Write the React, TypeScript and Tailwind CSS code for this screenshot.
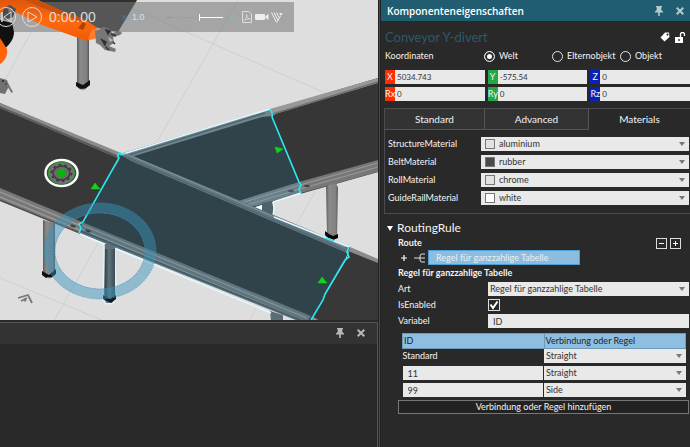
import { useState } from 'react'
import type { ReactNode } from 'react'

const materials = [
  { label: 'StructureMaterial', value: 'aluminium', swatch: 'bg-[#e2e2e2]' },
  { label: 'BeltMaterial', value: 'rubber', swatch: 'bg-[#4a4a4a]' },
  { label: 'RollMaterial', value: 'chrome', swatch: 'bg-[#e2e2e2]' },
  { label: 'GuideRailMaterial', value: 'white', swatch: 'bg-white' },
]

const coordinates = [
  { name: 'X', value: '5034.743', color: 'bg-[#ff2e00]' },
  { name: 'Y', value: '-575.54', color: 'bg-[#25a844]' },
  { name: 'Z', value: '0', color: 'bg-[#0a22b4]' },
  { name: 'Rx', value: '0', color: 'bg-[#ff2e00]' },
  { name: 'Ry', value: '0', color: 'bg-[#25a844]' },
  { name: 'Rz', value: '0', color: 'bg-[#0a22b4]' },
]

const PinIcon = () => (
  <svg viewBox="0 0 8 10" className="h-[10px] w-2" fill="currentColor">
    <path d="M1 0h6v1.2H6.3V4L8 5.4V6.4H4.8V10H3.2V6.4H0V5.4L1.7 4V1.2H1z" />
  </svg>
)

const CloseIcon = () => (
  <svg viewBox="0 0 8 8" className="h-2 w-2" stroke="currentColor" strokeWidth="2">
    <path d="M.7.7l6.6 6.6M7.3.7L.7 7.3" />
  </svg>
)

type SelectProps = {
  id?: string
  label?: string
  value: string
  options: string[]
  swatch?: string
}

const Select = ({ id, label, value, options, swatch }: SelectProps) => {
  const [current, setCurrent] = useState(value)
  return (
    <div className="relative h-[14px] w-full">
      <select
        id={id}
        aria-label={label}
        value={current}
        onChange={(e) => setCurrent(e.target.value)}
        className={`block h-[14px] w-full appearance-none bg-[#e9e9e9] pr-3 leading-[14px] text-[#333] ${
          swatch ? 'pl-[18px]' : 'pl-[2px]'
        }`}
      >
        {options.map((o) => (
          <option key={o}>{o}</option>
        ))}
      </select>
      {swatch && (
        <span
          className={`pointer-events-none absolute top-[2px] left-1 size-[10px] border border-[#777] ${swatch}`}
        />
      )}
      <svg
        viewBox="0 0 6 4"
        className="pointer-events-none absolute top-[5px] right-1 h-1 w-[6px]"
        fill="#777"
      >
        <path d="M0 0h6L3 4z" />
      </svg>
    </div>
  )
}

const Field = ({ label, htmlFor, children }: { label: string; htmlFor: string; children: ReactNode }) => (
  <div className="flex h-4 items-center">
    <label htmlFor={htmlFor} className="w-[90px] shrink-0">
      {label}
    </label>
    <div className="min-w-0 flex-1">{children}</div>
  </div>
)

const Scene = () => (
  <svg
    viewBox="0 0 378 321"
    preserveAspectRatio="xMinYMin slice"
    className="block h-full w-full"
  >
    <defs>
      <linearGradient id="steel" x1="0" x2="1" y1="0" y2="0">
        <stop offset="0" stopColor="#5a5a5a" />
        <stop offset=".25" stopColor="#8a8a8a" />
        <stop offset=".8" stopColor="#808080" />
        <stop offset="1" stopColor="#555" />
      </linearGradient>
      <linearGradient id="steelBlue" x1="0" x2="1" y1="0" y2="0">
        <stop offset="0" stopColor="#33434b" />
        <stop offset=".4" stopColor="#60737c" />
        <stop offset="1" stopColor="#3a4d56" />
      </linearGradient>
      <linearGradient id="arm" x1="0" x2="0" y1="0" y2="1">
        <stop offset="0" stopColor="#e0560a" />
        <stop offset=".5" stopColor="#ff6a10" />
        <stop offset="1" stopColor="#f05a04" />
      </linearGradient>
    </defs>
    <rect width="378" height="321" fill="#dedede" />
    <path
      d="M238 0L158 140M120 3L325 93M34 27L5 80M98 243L54 321M0 278L104 321M315 192L296 225M257 306l-8 15"
      fill="none"
      stroke="#c6c6c6"
      strokeWidth=".6"
    />

    {/* rear conveyor, with the simulation bar's shade over it */}
    <path d="M35 0H137L118 32L90 26z" fill="#2f2f2f" />
    <rect y="2" width="294" height="30" fill="#777" fillOpacity=".55" />
    <path d="M77 36H89V82L86 86H79L77 83z" fill="url(#steel)" />
    <path d="M76 82l7 3 7-5v5l-5 4h-5l-4-3z" fill="#111" />
    <path d="M79 89l4 1.500 4-2z" fill="#aaa" />

    {/* robot */}
    <path d="M0 20l12 3 2 9c0 8-6 14-11 18L0 45z" fill="#111" />
    <path d="M0 38l7 11c1 6-2 12-7 15z" fill="#ff6209" />
    <path d="M0 78l7 2 2 6-4 8-5-1z" fill="#707070" />
    <path d="M8 83l5 9-1.500 1-5-8z" fill="#777" />
    <circle cx="3" cy="81" r="1" fill="#222" />
    <circle cx="6" cy="84" r=".8" fill="#222" />
    <path d="M0 0H38L60 10L86 20L96 27L95 37L87 41L42 25L15 12L0 13z" fill="url(#arm)" />
    <path d="M38 0L60 10L86 20L82 22L50 11L24 0z" fill="#c9500c" />
    <path d="M92 28l7 3-4 8-7 1z" fill="#ff7d2e" />
    <path d="M4 8l6-3 6 4-3 8-8 3-3-5z" fill="#4c4c4c" />
    <path d="M8 9l4-1 1 4-4 2z" fill="#777" />
    <path d="M78 28l5-6 3 2-3 6z" fill="#a94409" />
    <path d="M95 31l4-1 4-3 7 2 2 4 8-2 2 2-2 2-7 2 1 6-5 3 7 3-1 3-10-2-5-5-4-2z" fill="#777" />
    <path
      d="M106 30l4 1-2 3zM102 40l4 2-1 3zM111 34l5 2M106 47l3 3M113 42l2 2"
      fill="#222"
      stroke="#333"
      strokeWidth="1.500"
    />
    <path d="M108 37l5 3-3 2z" fill="#bbb" />

    {/* left conveyor */}
    <path d="M0 103L120 154V158L80 233L0 201z" fill="#383838" />
    <path d="M0 103L121 153L118 158L0 108z" fill="#8b8b8b" />
    <path d="M0 106L119 156L118 158L0 108z" fill="#5b5b5b" />
    <path d="M0 188L82 222L80 234L0 201z" fill="#787878" />
    <path d="M0 192L81 226M0 197L80 230" stroke="#979797" strokeWidth="1.500" />
    <path d="M0 200L80 233" stroke="#4b4b4b" strokeWidth="1.200" />

    {/* right conveyor, upper */}
    <path d="M270 110L378 78V172L300 194L270 116z" fill="#363636" />
    <path d="M270 109L378 78V83L278 113L272 116z" fill="#989898" />
    <path d="M273 114L378 82" stroke="#707070" strokeWidth="1.500" />
    <path d="M299 182L378 160V172L301 193z" fill="#777" />
    <path d="M300 185L378 163M300 189L378 167" stroke="#999" strokeWidth="1.200" />
    <path d="M326 186l10-3 2 5-1 49-8 1-2-3z" fill="url(#steel)" />
    <path d="M325 231l4 3 4 2 5-2v4l-5 2-5-2-3-3z" fill="#050505" />

    {/* right conveyor, lower */}
    <path d="M350 249L378 260V321H310L346 260z" fill="#383838" />
    <path d="M350 247L378 259V263L348 251z" fill="#8a8a8a" />
    <path d="M310 315l10 6h-11z" fill="#8c8c8c" />

    {/* selected branch */}
    <path d="M124 153L270 109L272 116L298 182L301 193L252 208L240 203z" fill="#30434b" />
    <path d="M123 153L270 109L272 116L262 117L131 157z" fill="#72868f" />
    <path d="M126 156L265 113" stroke="#50666f" strokeWidth="1.500" />
    <path d="M238 201L299 182L301 193L252 207z" fill="#6b7f88" />
    <path d="M241 203L300 185M247 205L300 189" stroke="#879ba3" strokeWidth="1" />
    <path d="M262 203l10-2 2 6-1 12-11-4z" fill="#4d626c" />
    <path d="M252 208l10-3v7z" fill="#fff" />
    <path d="M273 202L301 193M273 202l1 6-1 9" fill="none" stroke="#e2fbff" strokeWidth="1.500" />

    {/* legs in front */}
    <path d="M43 220l12 3v50l-5 4-7-4z" fill="url(#steel)" />
    <path d="M42 271l7 4 7-6v5l-5 4h-5l-4-3z" fill="#0b0b0b" />
    <path d="M46 277l3 2 3-1.500z" fill="#aaa" />
    <path
      d="M104 242l13 4-2 5 1 45-3 7-7 1-3-5 1-45z"
      fill="#60717a"
      stroke="#d8f6fb"
      strokeWidth="1.500"
    />
    <path d="M105 249H115V298L110 301L105 297z" fill="url(#steelBlue)" />
    <path d="M103 295l7 4 6-4v4l-5 4-8-4z" fill="#111a1e" />
    <path d="M270 311l13 4v6h-12z" fill="#586d76" />

    {/* selected main belt */}
    <path d="M119 156L126 153L350 248L345 260L311 321H300L80 233V225L83 222L119 160z" fill="#30434b" />
    <path d="M119 154L126 153L350 247L347 253L131 161z" fill="#60757e" />
    <path d="M126 154L345 247" stroke="#83979f" strokeWidth="1" />
    <path d="M128 158L346 251" stroke="#4e646e" strokeWidth="1" />
    <path d="M82 222L311 316L308 321H298L80 233z" fill="#60757e" />
    <path d="M82 225L307 318M81 229L296 318" stroke="#82959d" strokeWidth="1.200" />
    <path d="M81 231L300 320" stroke="#445a64" strokeWidth="1.500" />
    <ellipse cx="88" cy="231" rx="3" ry="1.200" transform="rotate(15 88 231)" fill="#33464f" />
    <ellipse cx="73" cy="226" rx="3" ry="1.200" transform="rotate(15 73 226)" fill="#444" />
    <ellipse cx="291" cy="191" rx="3" ry="1.200" fill="#405660" />
    <ellipse cx="307" cy="186" rx="3" ry="1.200" fill="#444" />
    <path d="M80 234L104 244M116 249L271 313M123 154L270 109M274 217L349 247" fill="none" stroke="#dffaff" strokeWidth="1.500" />
    <path
      d="M125 153q-3 3-5 0q-4 2-1 5L83 222l-4 2 2 4-2 5M270 109q3 5 2 8l27 65 2 3-2 4 2 4M326 238l8 3M349 247l-2 5 2 5-4 3-20 34-2 6-12 20"
      fill="none"
      stroke="#28eaf2"
      strokeWidth="1.600"
    />

    {/* direction arrows */}
    <path d="M91 189l4-6 5 6zM275 147l8 2-6 4zM318 283l4-6 5 6z" fill="#0ed719" stroke="#0ed719" strokeWidth=".5" />

    {/* base frame marker */}
    <ellipse cx="61.500" cy="173" rx="16" ry="13" fill="#3b3b3b" stroke="#fff" strokeWidth="2.500" />
    <ellipse cx="61.500" cy="173" rx="13.500" ry="11" fill="#727272" stroke="#16a01b" strokeWidth=".8" />
    <ellipse cx="61.500" cy="173" rx="8.500" ry="7" fill="#6a6a6a" stroke="#3c3c3c" strokeWidth="1.500" />
    <ellipse cx="61.500" cy="173" rx="10" ry="8.200" fill="none" stroke="#3c3c3c" strokeWidth="2" strokeDasharray="2.500 3.200" />
    <circle cx="61.500" cy="173" r="4.300" fill="#04b60a" />

    {/* manipulator ring */}
    <path
      fillRule="evenodd"
      d="M44 251a56 48 0 1 0 112 0a56 48 0 1 0-112 0zM55 251a45 38 0 1 0 90 0a45 38 0 1 0-90 0z"
      fill="#3a93ba"
      fillOpacity=".48"
      stroke="#3d94b8"
      strokeWidth=".6"
      strokeDasharray="1.500 1"
    />
    <path d="M18 298l10-3 4 8M21 301l6-3" fill="none" stroke="#777" strokeWidth="1.800" />
    <circle cx="25" cy="300" r="1.500" fill="#777" />
  </svg>
)

const SimulationBar = () => (
  <div className="absolute top-[2px] left-0 flex h-[30px] w-[294px] items-center text-[#dcdcdc]">
    <button aria-label="Reset" className="-ml-1 size-5 shrink-0">
      <svg viewBox="0 0 20 20" fill="none" stroke="currentColor" strokeWidth="1">
        <circle cx="10" cy="10" r="9.500" />
        <path d="M6 5v10" strokeWidth="1.500" />
        <path d="M15 5v10l-7-5z" />
      </svg>
    </button>
    <button aria-label="Play" className="ml-[6px] size-5 shrink-0">
      <svg viewBox="0 0 20 20" fill="none" stroke="currentColor" strokeWidth="1">
        <circle cx="10" cy="10" r="9.500" />
        <path d="M6 5v10l9-5z" />
      </svg>
    </button>
    <span className="ml-[7px] w-[73px] font-['Liberation_Sans',sans-serif] text-[14px] leading-4">
      0:00.00
    </span>
    <span className="w-[10px] text-[#3f7f99]">x</span>
    <span className="w-[34px] font-['Liberation_Sans',sans-serif] text-[#c4e6f5]">1.0</span>
    <span className="h-px w-2 bg-[#63a9c4]" />
    <input
      type="range"
      aria-label="Speed"
      min={0}
      max={100}
      defaultValue={46}
      className="ml-[5px] h-3 w-11 appearance-none bg-transparent [&::-webkit-slider-runnable-track]:h-px [&::-webkit-slider-runnable-track]:bg-[linear-gradient(to_right,#63b4d2_48%,#fff_48%)] [&::-webkit-slider-thumb]:-mt-[3px] [&::-webkit-slider-thumb]:h-[7px] [&::-webkit-slider-thumb]:w-px [&::-webkit-slider-thumb]:appearance-none [&::-webkit-slider-thumb]:bg-white"
    />
    <svg viewBox="0 0 6 6" className="ml-[6px] size-[6px]" stroke="#8ab4c4">
      <path d="M3 0v6M0 3h6" />
    </svg>
    <button aria-label="PDF" className="ml-[7px]">
      <svg viewBox="0 0 10 12" className="h-3 w-[10px]" fill="none" stroke="currentColor">
        <path d="M.5.5H7L9.500 3V11.500H.5z" />
        <path d="M2 9.500C4 8 5 5 4.500 3.500C4.500 6 6 8 8.500 8C6 7.500 4 8 2 9.500" strokeWidth=".8" />
      </svg>
    </button>
    <button aria-label="Video" className="ml-[3px]">
      <svg viewBox="0 0 14 8" className="h-2 w-[14px]" fill="#eee">
        <rect y="1" width="10" height="6" rx="1" />
        <path d="M10.500 3L13.500 1v6L10.500 5z" />
      </svg>
    </button>
    <button aria-label="Experience" className="ml-[2px]">
      <svg viewBox="0 0 12 11" className="h-[11px] w-3" fill="none" stroke="#eee">
        <path d="M.5.5L5.500 10.500M3 .5L7 8.500M5.500 .5L8 5.500M6 10L9.500 4" strokeWidth="1" />
        <path d="M8 1h3.500L10 4z" fill="#eee" stroke="none" />
      </svg>
    </button>
  </div>
)

const Coordinates = () => {
  const [frame, setFrame] = useState('Welt')
  return (
    <section className="pl-1">
      <div role="radiogroup" aria-label="Koordinaten" className="flex h-5 items-center">
        <span className="w-[99px]">Koordinaten</span>
        {['Welt', 'Elternobjekt', 'Objekt'].map((name) => (
          <label key={name} className="flex w-[68px] items-center gap-1">
            <input
              type="radio"
              name="frame"
              checked={frame === name}
              onChange={() => setFrame(name)}
              className="size-[11px] shrink-0 appearance-none rounded-full border border-[#e4e4e4] checked:bg-white checked:shadow-[inset_0_0_0_2px_#292929]"
            />
            {name}
          </label>
        ))}
      </div>
      <div className="mt-1 grid grid-cols-3 gap-x-[3px] gap-y-[3px]">
        {coordinates.map(({ name, value, color }) => (
          <label key={name} className="flex h-[14px] leading-[14px]">
            <span className={`w-[10px] shrink-0 text-center leading-[14px] ${color}`}>{name}</span>
            <input
              defaultValue={value}
              className="w-full min-w-0 bg-[#e9e9e9] pl-[2px] text-[8px] text-[#333]"
            />
          </label>
        ))}
      </div>
    </section>
  )
}

const Materials = () => (
  <section className="mt-[7px] ml-[3px] border-y border-l border-[#4c4c4c]">
    <div role="tablist" className="flex h-[21px] text-[10px]">
      <button role="tab" className="w-[100px] border-r border-b border-[#555] bg-[#333]">
        Standard
      </button>
      <button role="tab" className="w-[104px] border-r border-b border-[#555] bg-[#333]">
        Advanced
      </button>
      <button role="tab" aria-selected="true" className="flex-1 border-b border-transparent">
        Materials
      </button>
    </div>
    <div className="flex flex-col gap-1 pt-[7px] pr-px pb-2 pl-[3px]">
      {materials.map(({ label, value, swatch }) => (
        <div key={label} className="flex h-[14px] items-center">
          <label htmlFor={label} className="w-[93px] shrink-0">
            {label}
          </label>
          <Select id={label} value={value} options={materials.map((m) => m.value)} swatch={swatch} />
        </div>
      ))}
    </div>
  </section>
)

const RoutingRule = () => (
  <section className="pt-[6px] pr-px pl-[6px]">
    <h3 className="flex h-4 items-center gap-1 text-[12px]">
      <svg viewBox="0 0 6 5" className="h-[5px] w-[6px]" fill="#fff">
        <path d="M0 0h6L3 5z" />
      </svg>
      RoutingRule
    </h3>
    <div className="pl-[11px]">
      <div className="flex h-[14px] items-center justify-between pr-2">
        <span className="font-bold">Route</span>
        <span className="flex gap-[3px]">
          <button aria-label="Entfernen" className="size-[11px] border border-[#ddd]">
            <svg viewBox="0 0 9 9" stroke="#fff" strokeWidth="1">
              <path d="M2 4.500h5" />
            </svg>
          </button>
          <button aria-label="Hinzufügen" className="size-[11px] border border-[#ddd]">
            <svg viewBox="0 0 9 9" stroke="#fff" strokeWidth="1">
              <path d="M2 4.500h5M4.500 2v5" />
            </svg>
          </button>
        </span>
      </div>
      <div className="flex h-[15px] items-center">
        <svg viewBox="0 0 6 6" className="ml-[3px] size-[6px]" stroke="#fff" strokeWidth="1.200">
          <path d="M3 0v6M0 3h6" />
        </svg>
        <svg viewBox="0 0 12 10" className="ml-[7px] h-[10px] w-3" fill="none" stroke="#ddd">
          <path d="M0 5h11M11 1H8Q6 1 6 3v4q0 2 2 2h3" />
        </svg>
        <button className="ml-[2px] h-[15px] w-[152px] border border-[#4e9fd6] bg-[#8abde0] pl-[7px] text-left leading-[13px] text-[#eee]">
          Regel für ganzzahlige Tabelle
        </button>
      </div>
      <h4 className="h-4 leading-4 font-bold">Regel für ganzzahlige Tabelle</h4>
      <Field label="Art" htmlFor="art">
        <Select id="art" value="Regel für ganzzahlige Tabelle" options={['Regel für ganzzahlige Tabelle']} />
      </Field>
      <Field label="IsEnabled" htmlFor="enabled">
        <span className="relative block size-3">
          <input
            id="enabled"
            type="checkbox"
            defaultChecked
            className="peer block size-3 appearance-none border border-[#ddd]"
          />
          <svg
            viewBox="0 0 12 12"
            className="pointer-events-none absolute inset-0 hidden size-3 peer-checked:block"
            fill="none"
            stroke="#fff"
            strokeWidth="2"
          >
            <path d="M2.500 5.500L5 9L9.500 2.500" />
          </svg>
        </span>
      </Field>
      <Field label="Variabel" htmlFor="variable">
        <input
          id="variable"
          defaultValue="ID"
          className="block h-[14px] w-full bg-[#e9e9e9] pl-[5px] text-[#333]"
        />
      </Field>
      <div className="pt-1 pr-[3px] pl-1">
        <table className="w-full table-fixed border-collapse">
          <thead>
            <tr className="h-[15px] bg-[#8fbfe0] text-left text-[#222]">
              <th className="border border-[#6d9ab8] py-0 pl-px font-normal">ID</th>
              <th className="border border-[#6d9ab8] py-0 pl-px font-normal">Verbindung oder Regel</th>
            </tr>
          </thead>
          <tbody>
            <tr>
              <td className="p-0 pb-[3px]">Standard</td>
              <td className="p-0 pb-[3px]">
                <Select label="Standard" value="Straight" options={['Straight', 'Side']} />
              </td>
            </tr>
            {[
              { id: '11', rule: 'Straight' },
              { id: '99', rule: 'Side' },
            ].map(({ id, rule }) => (
              <tr key={id}>
                <td className="p-0 pr-px pb-[3px]">
                  <input
                    aria-label={`ID ${id}`}
                    defaultValue={id}
                    className="block h-[14px] w-full bg-[#e9e9e9] pl-[5px] text-[#333]"
                  />
                </td>
                <td className="p-0 pb-[3px]">
                  <Select label={`Regel ${id}`} value={rule} options={['Straight', 'Side']} />
                </td>
              </tr>
            ))}
          </tbody>
        </table>
      </div>
      <button className="block h-[14px] w-full border border-[#777] bg-[#222] leading-3">
        Verbindung oder Regel hinzufügen
      </button>
    </div>
  </section>
)

const App = () => {
  return (
    <div className="flex h-screen overflow-hidden bg-[#292929] font-['Lato','Open_Sans',sans-serif] text-[9px] leading-3 text-[#f4f4f4]">
      <main className="flex min-w-0 flex-1 flex-col">
        <div className="relative min-h-0 flex-[321]">
          <Scene />
          <SimulationBar />
        </div>
        <section className="flex min-h-0 flex-[126] flex-col border-t-2 border-[#292929]">
          <div className="flex h-[22px] shrink-0 items-center justify-end gap-[13px] border-t border-r border-[#555] bg-[#333] pr-3 text-[#b8b8b8]">
            <button aria-label="Anheften">
              <PinIcon />
            </button>
            <button aria-label="Schließen">
              <CloseIcon />
            </button>
          </div>
          <div className="flex-1 border-r border-[#555] bg-[#292929]" />
        </section>
      </main>
      <aside className="w-[312px] shrink-0 border-l border-[#222] bg-[#292929]">
        <div className="h-full border-l border-[#4c4c4c]">
          <div className="h-full border-l border-[#222]">
            <header className="flex h-[21px] items-center bg-[#205d70] pr-[6px] pl-[6px] text-[#b5c9d1]">
              <h1 className="flex-1 font-['Open_Sans',sans-serif] text-[10px] font-semibold text-white">
                Komponenteneigenschaften
              </h1>
              <button aria-label="Anheften">
                <PinIcon />
              </button>
              <button aria-label="Schließen" className="ml-[13px]">
                <CloseIcon />
              </button>
            </header>
            <div className="flex h-[25px] items-center pt-[7px] pr-1 pl-1">
              <h2 className="flex-1 text-[13px] text-[#2d596b]">Conveyor Y-divert</h2>
              <button aria-label="Tag">
                <svg viewBox="0 0 10 10" className="size-[10px]" fill="#fff">
                  <path fillRule="evenodd" d="M5 .5L9 .5L9.500 5L4.500 9.500L.5 5.500zM7.500 1.500a1 1 0 1 0 .1 0z" />
                </svg>
              </button>
              <button aria-label="Sperren" className="ml-1">
                <svg viewBox="0 0 12 11" className="h-[11px] w-3" fill="#fff">
                  <path fillRule="evenodd" d="M1 5h8v6H1zM4.300 7v2h1.400V7z" />
                  <path d="M6.500 5V2.500q0-2 2-2t2 2V4" fill="none" stroke="#fff" strokeWidth="1.300" />
                </svg>
              </button>
            </div>
            <Coordinates />
            <Materials />
            <RoutingRule />
          </div>
        </div>
      </aside>
    </div>
  )
}

export default App
